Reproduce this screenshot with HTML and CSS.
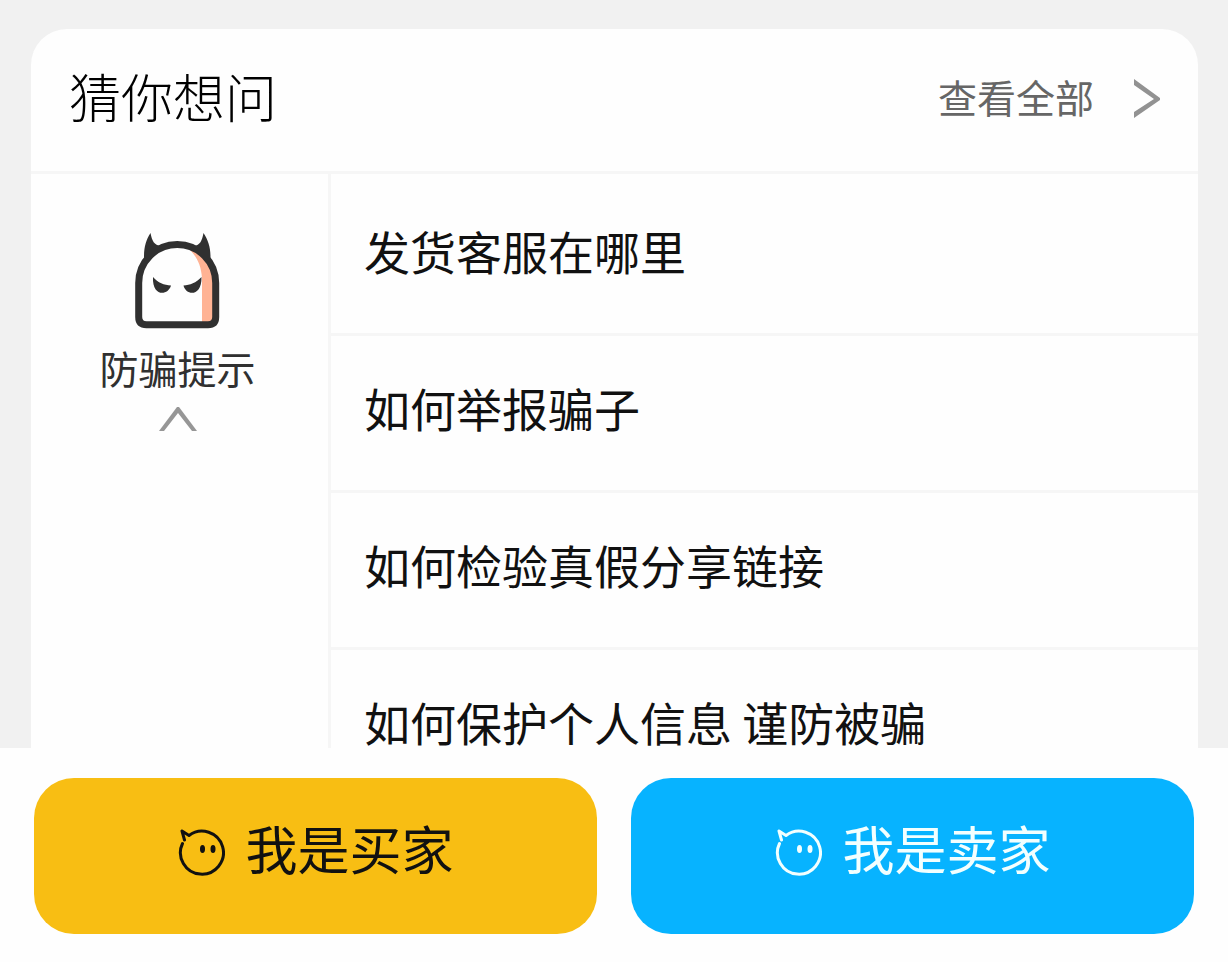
FILE: index.html
```html
<!DOCTYPE html>
<html lang="zh-CN">
<head>
<meta charset="utf-8">
<meta name="viewport" content="width=device-width, initial-scale=1">
<title>猜你想问</title>
<link rel="stylesheet" href="styles.css">
</head>
<body>
<main class="content">
  <section class="card">
    <header class="card-header">
      <h1 class="card-title">猜你想问</h1>
      <a class="view-all" href="#all">查看全部
        <svg class="view-all-arrow" viewBox="0 0 26 46" aria-hidden="true"><path d="M0 6 L26 25 V27 L0 45 V39 L20 26 L0 12 Z" fill="#929292"/></svg>
      </a>
    </header>
    <div class="card-body">
      <aside class="category">
        <button class="category-button" type="button" aria-expanded="true">
          <svg class="category-icon" viewBox="0 0 86 96" aria-hidden="true">
            <path d="M50 13 C73 17 80 32 80 48 V90 H67 V45 C66 30 60 20 50 13 Z" fill="#ffb394"/>
            <path d="M3.700 84 V50 A38.500 38.500 0 0 1 80.700 50 V84 Q80.700 91.700 73 91.700 H11.500 Q3.700 91.700 3.700 84 Z" fill="none" stroke="#303030" stroke-width="7"/>
            <path d="M9 24 C9 14 11 7 15.500 0 C17 8 19 12 26 13 L10 29 Z M75.500 24 C75.500 14 73 7 68.500 0 C67 8 65 12 59 13 L75 29 Z" fill="#303030"/>
            <path d="M18 44 C23 50 29 52 36 52.500 C33 63 17 64 18 44 Z M66.500 44 C61 50 55 52 48.500 52.500 C51 63 67 64 66.500 44 Z" fill="#303030"/>
          </svg>
          <span class="category-name">防骗提示</span>
          <svg class="category-arrow" viewBox="0 0 38 24" aria-hidden="true"><path d="M0 24 L18 0 H20 L38 24 H33 L19 6 L5 24 Z" fill="#969696"/></svg>
        </button>
      </aside>
      <ul class="questions">
        <li class="question"><a class="question-link" href="#q1">发货客服在哪里</a></li>
        <li class="question"><a class="question-link" href="#q2">如何举报骗子</a></li>
        <li class="question"><a class="question-link" href="#q3">如何检验真假分享链接</a></li>
        <li class="question"><a class="question-link" href="#q4">如何保护个人信息 谨防被骗</a></li>
      </ul>
    </div>
  </section>
</main>
<footer class="actions">
  <button class="action action-buyer" type="button">
    <svg class="action-icon" viewBox="0 0 48 50" aria-hidden="true"><path d="M7.500 13 L5 4 L12 8.500 A21.500 21.500 0 1 1 5.500 16.500" fill="none" stroke="currentColor" stroke-width="3" stroke-linecap="round" stroke-linejoin="round"/><ellipse cx="25.500" cy="22" rx="2.500" ry="4" fill="currentColor"/><ellipse cx="36" cy="22" rx="2.500" ry="4" fill="currentColor"/></svg>
    <span>我是买家</span>
  </button>
  <button class="action action-seller" type="button">
    <svg class="action-icon" viewBox="0 0 48 50" aria-hidden="true"><path d="M7.500 13 L5 4 L12 8.500 A21.500 21.500 0 1 1 5.500 16.500" fill="none" stroke="currentColor" stroke-width="3" stroke-linecap="round" stroke-linejoin="round"/><ellipse cx="25.500" cy="22" rx="2.500" ry="4" fill="currentColor"/><ellipse cx="36" cy="22" rx="2.500" ry="4" fill="currentColor"/></svg>
    <span>我是卖家</span>
  </button>
</footer>
</body>
</html>
```
FILE: styles.css
```css
* {
  box-sizing: border-box;
}

body {
  display: flex;
  flex-direction: column;
  height: 100vh;
  margin: 0;
  background: #f1f1f1;
  color: #111;
  font-family: "Noto Sans CJK SC", "Noto Sans", sans-serif;
}

button {
  border: 0;
  padding: 0;
  background: none;
  color: inherit;
  font: inherit;
  cursor: pointer;
}

a {
  color: inherit;
  text-decoration: none;
}

svg {
  display: block;
  flex: none;
}

.content {
  display: flex;
  flex: 1;
  min-height: 0;
  overflow: hidden;
  padding: 29px 30px 0 31px;
}

.card {
  display: flex;
  flex: 1;
  flex-direction: column;
  min-width: 0;
  border-radius: 36px 36px 0 0;
  background: #fefefe;
}

.card-header {
  display: flex;
  align-items: center;
  justify-content: space-between;
  padding: 29px 38px 37px;
  border-bottom: 3px solid #f6f6f6;
}

.card-title {
  margin: 0;
  color: #000;
  font-size: 52px;
  font-weight: 300;
  line-height: 76px;
}

.view-all {
  display: flex;
  align-items: center;
  gap: 40px;
  color: #666;
  font-size: 39px;
  line-height: 76px;
}

.view-all-arrow {
  width: 26px;
  height: 46px;
}

.card-body {
  display: flex;
  flex: 1;
}

.category {
  flex: none;
  width: 300px;
  border-right: 3px solid #f6f6f6;
}

.category-button {
  display: flex;
  flex-direction: column;
  align-items: center;
  width: 100%;
  padding: 59px 4px 0 0;
}

.category-icon {
  width: 86px;
  height: 96px;
}

.category-name {
  margin: 9px 0 11px;
  color: #303030;
  font-size: 39px;
  line-height: 58px;
}

.category-arrow {
  width: 38px;
  height: 24px;
}

.questions {
  flex: 1;
  margin: 0;
  padding: 5px 0 0;
  list-style: none;
}

.question {
  border-bottom: 3px solid #f6f6f6;
}

.question-link {
  display: block;
  padding: 47px 33px 59px;
  font-size: 46px;
  line-height: 48px;
}

.actions {
  display: flex;
  flex: none;
  gap: 34px;
  padding: 30px 34px 28px;
  background: #fefefe;
}

.action {
  display: flex;
  flex: 1;
  align-items: center;
  justify-content: center;
  gap: 20px;
  padding: 32px 0 48px;
  border-radius: 40px;
  font-size: 52px;
  line-height: 76px;
}

.action-icon {
  width: 48px;
  height: 50px;
  margin-top: 8px;
}

.action-buyer {
  background: #f8be13;
  color: #111;
}

.action-seller {
  background: #07b3ff;
  color: #f2ffff;
}
```
